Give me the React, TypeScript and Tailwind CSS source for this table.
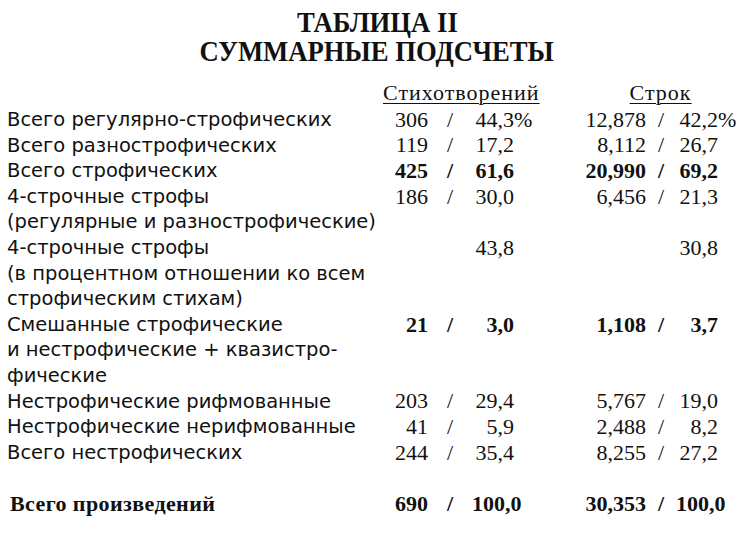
type Row = {
  label: string;
  a?: string;
  ap?: string;
  b?: string;
  bp?: string;
  pct?: boolean;
  bold?: boolean;
  boldLabel?: boolean;
  slash?: boolean;
};

const rows: Row[] = [
  { label: "Всего регулярно-строфических", a: "306", ap: "44,3", b: "12,878", bp: "42,2", pct: true, slash: true },
  { label: "Всего разнострофических", a: "119", ap: "17,2", b: "8,112", bp: "26,7", slash: true },
  { label: "Всего строфических", a: "425", ap: "61,6", b: "20,990", bp: "69,2", bold: true, slash: true },
  { label: "4-строчные строфы", a: "186", ap: "30,0", b: "6,456", bp: "21,3", slash: true },
  { label: "(регулярные и разнострофические)" },
  { label: "4-строчные строфы", ap: "43,8", bp: "30,8" },
  { label: "(в процентном отношении ко всем" },
  { label: "строфическим стихам)" },
  { label: "Смешанные строфические", a: "21", ap: "3,0", b: "1,108", bp: "3,7", bold: true, slash: true },
  { label: "и нестрофические + квазистро-" },
  { label: "фические" },
  { label: "Нестрофические рифмованные", a: "203", ap: "29,4", b: "5,767", bp: "19,0", slash: true },
  { label: "Нестрофические нерифмованные", a: "41", ap: "5,9", b: "2,488", bp: "8,2", slash: true },
  { label: "Всего нестрофических", a: "244", ap: "35,4", b: "8,255", bp: "27,2", slash: true },
  { label: "" },
  { label: "Всего произведений", a: "690", ap: "100,0", b: "30,353", bp: "100,0", bold: true, boldLabel: true, slash: true },
];

const serif = "font-['Liberation_Serif',serif]";
const sans = "font-['DejaVu_Sans',sans-serif]";

function TableRow({ r }: { r: Row }) {
  const num = `${serif} text-[22px] ${r.bold ? "font-bold" : ""}`;
  return (
    <div className="grid grid-cols-[375px_53px_44px_42px_132px_30px_42px] h-[25.6px] items-center leading-none whitespace-nowrap">
      <div
        className={
          r.boldLabel
            ? `${serif} font-bold text-[22px] pl-[10px] tracking-[0.4px]`
            : `${sans} text-[19.5px] pl-[7px]`
        }
      >
        {r.label}
      </div>
      <div className={`${num} text-right`}>{r.a}</div>
      <div className={`${num} text-center`}>{r.slash ? "/" : ""}</div>
      <div className={`${num} text-right`}>
        <span className="relative">
          {r.ap}
          {r.pct && <span className="absolute left-full">%</span>}
        </span>
      </div>
      <div className={`${num} text-right`}>{r.b}</div>
      <div className={`${num} text-center`}>{r.slash ? "/" : ""}</div>
      <div className={`${num} text-right`}>
        <span className="relative">
          {r.bp}
          {r.pct && <span className="absolute left-full">%</span>}
        </span>
      </div>
    </div>
  );
}

export default function App() {
  return (
    <div className="w-[754px] h-[558px] bg-white text-[#111] overflow-hidden">
      <div className={`${serif} font-bold text-[29px] leading-[29px] flex flex-col items-center pt-[8px]`}>
        <div className="scale-x-[0.92]">ТАБЛИЦА II</div>
        <div className="scale-x-[0.92]">СУММАРНЫЕ ПОДСЧЕТЫ</div>
      </div>
      <div className="flex mt-[16px] h-[22px] items-center leading-none">
        <div
          className={`${serif} text-[22px] tracking-[1px] underline underline-offset-[3px] decoration-1 ml-[383px]`}
        >
          Стихотворений
        </div>
        <div
          className={`${serif} text-[22px] tracking-[1px] underline underline-offset-[3px] decoration-1 ml-[90px]`}
        >
          Строк
        </div>
      </div>
      <div className="mt-[3px]">
        {rows.map((r, i) => (
          <TableRow key={i} r={r} />
        ))}
      </div>
    </div>
  );
}
